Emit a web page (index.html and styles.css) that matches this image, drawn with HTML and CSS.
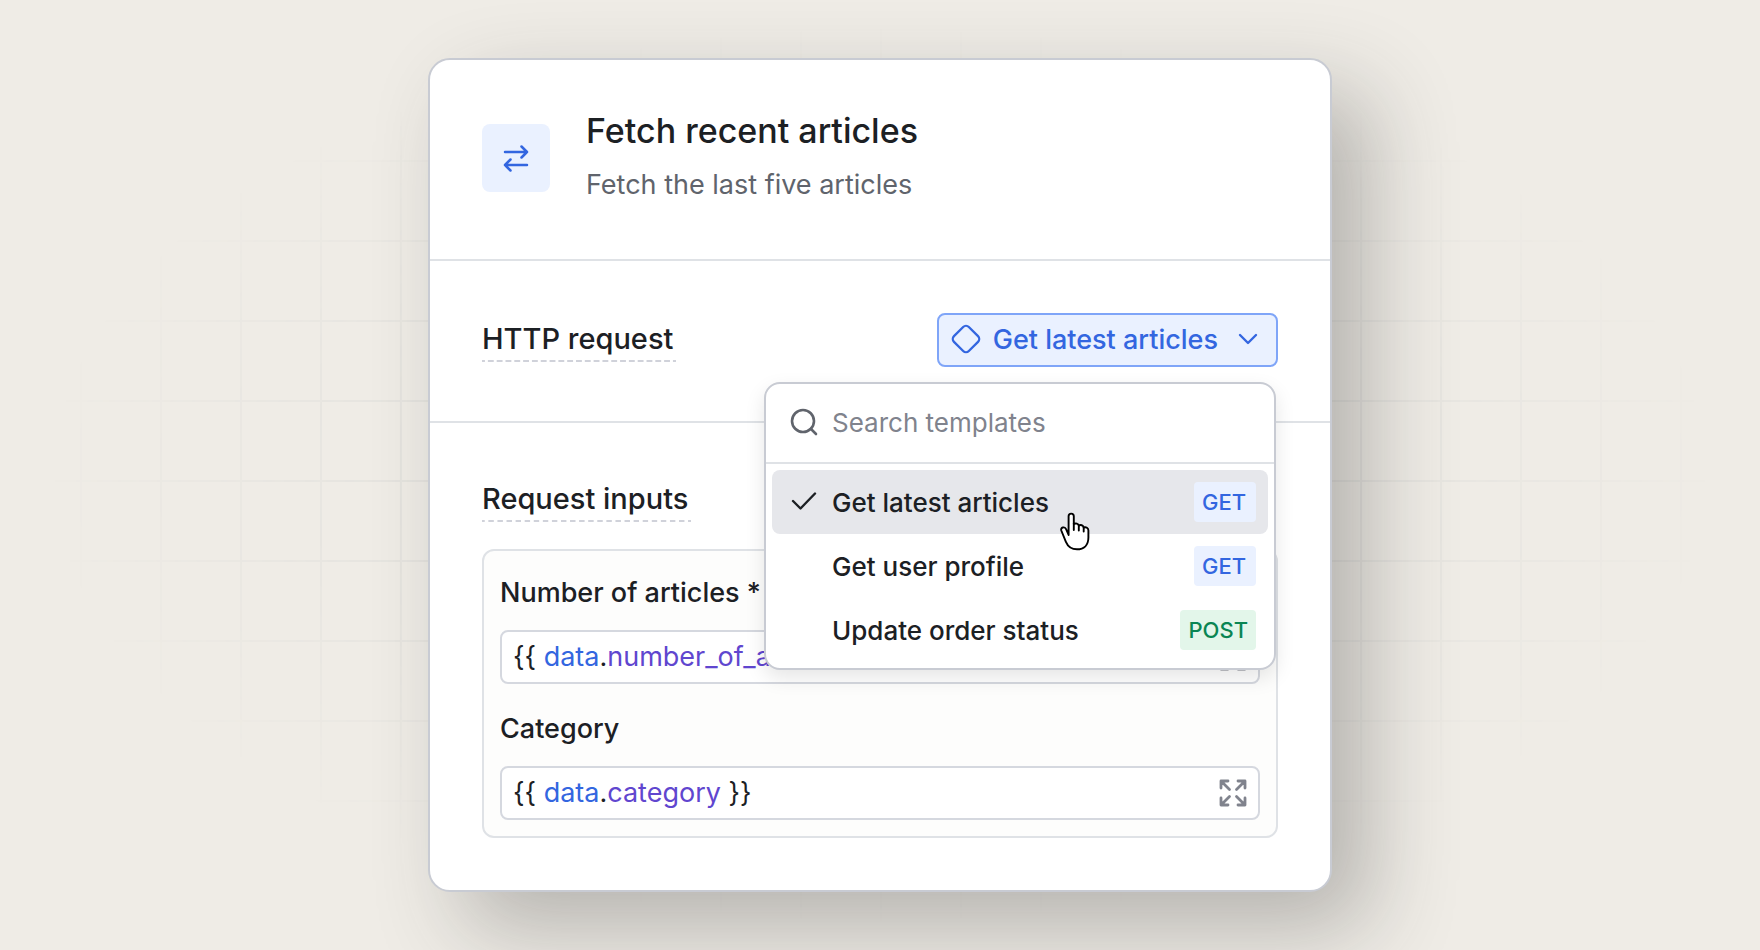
FILE: index.html
```html
<!DOCTYPE html>
<html lang="en">
<head>
<meta charset="utf-8">
<meta name="viewport" content="width=device-width, initial-scale=1">
<title>Fetch recent articles</title>
<link rel="stylesheet" href="styles.css">
</head>
<body class="page">
<main class="card">
  <header class="card-header">
    <span class="step-icon">
      <svg width="28" height="28" viewBox="0 0 28 28" fill="none" stroke="currentColor" stroke-width="2.5" stroke-linecap="round" stroke-linejoin="round" aria-hidden="true">
        <path d="M3 8h22M19.500 2.500L25 8l-5.500 5.500M25 21H3M8.500 15.500L3 21l5.500 5.500"/>
      </svg>
    </span>
    <div class="heading">
      <h1 class="title">Fetch recent articles</h1>
      <p class="subtitle">Fetch the last five articles</p>
    </div>
  </header>

  <section class="request">
    <h2 class="section-title">HTTP request</h2>
    <div class="picker">
      <button class="picker-button" type="button" aria-haspopup="listbox" aria-expanded="true">
        <svg width="30" height="30" viewBox="0 0 30 30" fill="none" stroke="currentColor" stroke-width="2.3" aria-hidden="true">
          <rect x="4.500" y="4.500" width="21" height="21" rx="4" transform="rotate(45 15 15)"/>
        </svg>
        <span class="picker-label">Get latest articles</span>
        <svg width="20" height="20" viewBox="0 0 20 20" fill="none" stroke="currentColor" stroke-width="2.4" stroke-linecap="round" stroke-linejoin="round" aria-hidden="true">
          <path d="M2 6l8 8 8-8"/>
        </svg>
      </button>

      <div class="menu">
        <label class="search">
          <svg class="search-icon" width="28" height="28" viewBox="0 0 28 28" fill="none" stroke="currentColor" stroke-width="2.6" stroke-linecap="round" aria-hidden="true">
            <circle cx="13" cy="13" r="11"/><path d="M21 21l5 5"/>
          </svg>
          <input class="search-input" type="text" placeholder="Search templates" aria-label="Search templates">
        </label>
        <ul class="options">
          <li>
            <button class="option option-active" type="button">
              <svg class="option-check" width="28" height="28" viewBox="0 0 28 28" fill="none" stroke="currentColor" stroke-width="2.4" stroke-linecap="round" stroke-linejoin="round" aria-hidden="true">
                <path d="M3 13l7.500 7.500L25 5.500"/>
              </svg>
              <span class="option-label">Get latest articles</span>
              <span class="method method-get">GET</span>
            </button>
            <svg class="pointer" width="32" height="40" viewBox="0 0 32 40" fill="#fff" stroke="#000" stroke-width="1.900" stroke-linecap="round" stroke-linejoin="round" aria-hidden="true">
              <path d="M8.600 24V5.200a2.600 2.600 0 0 1 5.200 0v7.900c1.800-1.300 4.600-.6 5 1.500 1.800-1.200 4.500-.4 4.900 1.900 2.400-1 4.700.6 4.700 3V26.500c0 7.500-4.400 11.800-11.400 11.800-5.500 0-9-2.600-11.100-7.500L1.300 19.500c-1-3 3.400-4.600 4.900-1.200z"/>
              <path d="M13.800 12.500V19M18.800 14.500V19.500M23.700 16.500V20.500" fill="none"/>
            </svg>
          </li>
          <li>
            <button class="option" type="button">
              <span class="option-label">Get user profile</span>
              <span class="method method-get">GET</span>
            </button>
          </li>
          <li>
            <button class="option" type="button">
              <span class="option-label">Update order status</span>
              <span class="method method-post">POST</span>
            </button>
          </li>
        </ul>
      </div>
    </div>
  </section>

  <section class="inputs">
    <h2 class="section-title">Request inputs</h2>
    <div class="panel">
      <div class="field-group">
        <label class="field-label" for="count">Number of articles *</label>
        <div class="field">
          <span class="field-code" aria-hidden="true">{{ <span class="token-object">data</span>.<span class="token-key">number_of_articles</span> }}</span>
          <input class="field-input" id="count" type="text" value="{{ data.number_of_articles }}">
          <button class="expand" type="button" aria-label="Expand number of articles">
            <svg width="28" height="28" viewBox="0 0 28 28" fill="none" stroke="currentColor" stroke-width="2.800" stroke-linecap="round" stroke-linejoin="round" aria-hidden="true">
              <path d="M2 9V2h7M2 2l8.500 8.500M19 2h7v7M26 2l-8.500 8.500M2 19v7h7M2 26l8.500-8.500M19 26h7v-7M26 26l-8.500-8.500"/>
            </svg>
          </button>
        </div>
      </div>
      <div class="field-group">
        <label class="field-label" for="category">Category</label>
        <div class="field">
          <span class="field-code" aria-hidden="true">{{ <span class="token-object">data</span>.<span class="token-key">category</span> }}</span>
          <input class="field-input" id="category" type="text" value="{{ data.category }}">
          <button class="expand" type="button" aria-label="Expand category">
            <svg width="28" height="28" viewBox="0 0 28 28" fill="none" stroke="currentColor" stroke-width="2.800" stroke-linecap="round" stroke-linejoin="round" aria-hidden="true">
              <path d="M2 9V2h7M2 2l8.500 8.500M19 2h7v7M26 2l-8.500 8.500M2 19v7h7M2 26l8.500-8.500M19 26h7v-7M26 26l-8.500-8.500"/>
            </svg>
          </button>
        </div>
      </div>
    </div>
  </section>
</main>
</body>
</html>
```

FILE: styles.css
```css
* {
  box-sizing: border-box;
}

.page {
  position: relative;
  display: grid;
  grid-template-columns: minmax(0, 904px);
  place-content: center;
  min-height: 100vh;
  margin: 0;
  padding: 24px;
  background: #efece6;
  color: #1c2024;
  font-family: Inter, "Liberation Sans", sans-serif;
  font-size: 26px;
}

.page::before {
  content: "";
  position: absolute;
  inset: 0;
  background:
    linear-gradient(#dadad7 2px, transparent 2px) 0 0 / 80px 80px,
    linear-gradient(90deg, #dadad7 2px, transparent 2px) 0 0 / 80px 80px;
  -webkit-mask-image: radial-gradient(closest-side, #000, rgba(0, 0, 0, 0.4) 60%, transparent 95%);
  mask-image: radial-gradient(closest-side, #000, rgba(0, 0, 0, 0.4) 60%, transparent 95%);
}

.card {
  position: relative;
  border: 2px solid #c8cbd3;
  border-radius: 22px;
  background: #fff;
  box-shadow: 36px 36px 88px rgba(45, 45, 45, 0.3);
}

.card-header {
  display: flex;
  align-items: center;
  gap: 36px;
  padding: 44px 52px 47px;
  border-bottom: 2px solid #dfe2e6;
}

.step-icon {
  display: grid;
  place-items: center;
  width: 68px;
  height: 68px;
  border-radius: 8px;
  background: #eaf1ff;
  color: #3366e0;
}

.title,
.subtitle,
.section-title {
  margin: 0;
}

.title {
  font-size: 34px;
  font-weight: 500;
  line-height: 54px;
}

.subtitle {
  color: #60646c;
  font-size: 27px;
  line-height: 54px;
}

.request {
  display: flex;
  align-items: center;
  justify-content: space-between;
  padding: 52px 52px 54px;
  border-bottom: 2px solid #dfe2e6;
}

.section-title {
  width: fit-content;
  padding: 0 3px 2px 0;
  background: linear-gradient(90deg, #d0d2da 28%, transparent 28% 72%, #d0d2da 72%) 0 100% / 9px 2px;
  background-repeat: round no-repeat;
  font-size: 29px;
  font-weight: 500;
  line-height: 42px;
}

.picker {
  position: relative;
}

.picker-button {
  display: flex;
  align-items: center;
  height: 54px;
  padding: 0 18px 2px 12px;
  border: 2px solid #7fa5f8;
  border-radius: 8px;
  background: #eaf1ff;
  color: #3366e0;
  font: inherit;
  font-size: 27px;
  font-weight: 500;
}

.picker-label {
  margin: 0 20px 0 12px;
}

.menu {
  position: absolute;
  z-index: 1;
  top: 69px;
  right: 2px;
  width: 512px;
  border: 2px solid #c8cbd3;
  border-radius: 16px;
  background: #fff;
  box-shadow: 0 8px 20px rgba(0, 0, 0, 0.1);
}

.search {
  display: flex;
  align-items: center;
  gap: 14px;
  height: 80px;
  padding: 0 24px 2px;
  border-bottom: 2px solid #dfe2e6;
}

.search-icon {
  flex: none;
  color: #60646c;
}

.search-input {
  flex: 1;
  min-width: 0;
  padding: 0;
  border: 0;
  outline: 0;
  background: none;
  color: inherit;
  font: inherit;
}

.search-input::placeholder {
  color: #80838d;
  opacity: 1;
}

.options {
  margin: 0;
  padding: 6px;
  list-style: none;
}

.options li {
  position: relative;
}

.option {
  display: grid;
  grid-template-columns: 28px 1fr auto;
  column-gap: 14px;
  align-items: center;
  width: 100%;
  height: 64px;
  padding: 0 12px 0 18px;
  border: 0;
  border-radius: 8px;
  background: none;
  color: inherit;
  font: inherit;
  font-weight: 500;
  text-align: left;
}

.option-active {
  background: #e6e7eb;
}

.option-label {
  grid-column: 2;
}

.method {
  min-width: 62px;
  padding: 0 8px;
  border-radius: 4px;
  font-size: 22px;
  line-height: 40px;
}

.method-get {
  background: #eaf1ff;
  color: #3366e0;
}

.method-post {
  background: #e3f6ea;
  color: #0a8553;
}

.pointer {
  position: absolute;
  top: 41px;
  left: 288px;
}

.inputs {
  padding: 55px 52px 52px;
}

.panel {
  display: flex;
  flex-direction: column;
  gap: 24px;
  margin-top: 27px;
  padding: 21px 16px 16px;
  border: 2px solid #dfe2e6;
  border-radius: 12px;
  background: #fdfdfc;
}

.field-group {
  display: flex;
  flex-direction: column;
  gap: 16px;
}

.field-label {
  font-size: 27px;
  font-weight: 500;
  line-height: 42px;
}

.field {
  display: grid;
  grid-template-columns: 1fr auto;
  align-items: center;
  height: 54px;
  padding: 0 11px;
  border: 2px solid #d5d8df;
  border-radius: 8px;
  background: #fff;
  font-size: 27px;
}

.field-code,
.field-input {
  grid-area: 1 / 1;
  padding: 0 0 2px;
}

.field-code {
  white-space: pre;
}

.field-input {
  min-width: 0;
  border: 0;
  outline: 0;
  background: none;
  color: transparent;
  caret-color: #1c2024;
  font: inherit;
}

.token-object {
  color: #3366e0;
}

.token-key {
  color: #6046cf;
}

.expand {
  display: grid;
  padding: 0;
  border: 0;
  background: none;
  color: #80838d;
}
```
